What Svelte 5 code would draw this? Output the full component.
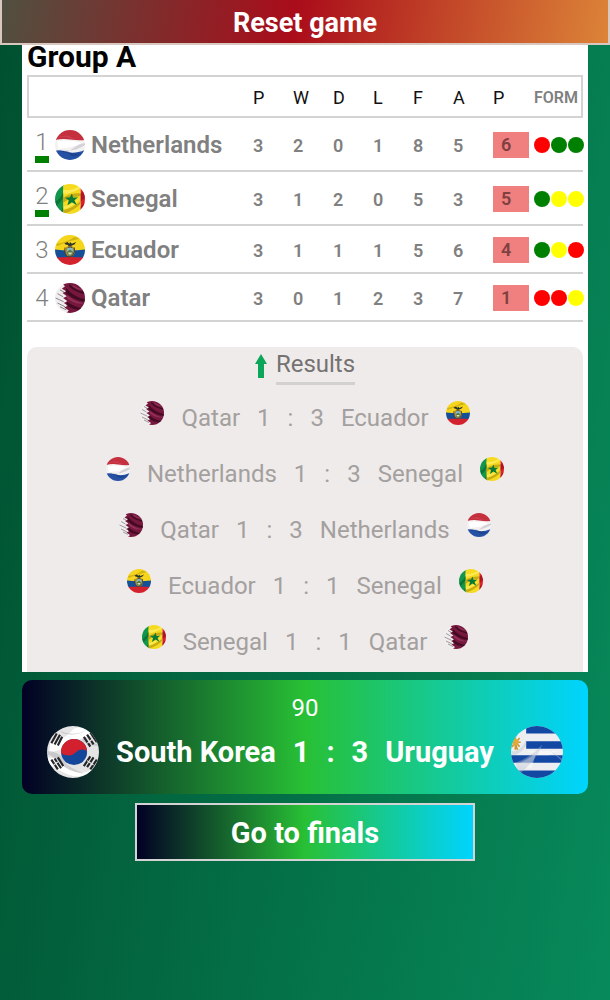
<script>
  const standings = [
    { team: 'Netherlands', stats: [3, 2, 0, 1, 8, 5], points: 6, form: ['loss', 'win', 'win'] },
    { team: 'Senegal', stats: [3, 1, 2, 0, 5, 3], points: 5, form: ['win', 'draw', 'draw'] },
    { team: 'Ecuador', stats: [3, 1, 1, 1, 5, 6], points: 4, form: ['win', 'draw', 'loss'] },
    { team: 'Qatar', stats: [3, 0, 1, 2, 3, 7], points: 1, form: ['loss', 'loss', 'draw'] }
  ];

  const results = [
    { home: 'Qatar', hg: 1, ag: 3, away: 'Ecuador' },
    { home: 'Netherlands', hg: 1, ag: 3, away: 'Senegal' },
    { home: 'Qatar', hg: 1, ag: 3, away: 'Netherlands' },
    { home: 'Ecuador', hg: 1, ag: 1, away: 'Senegal' },
    { home: 'Senegal', hg: 1, ag: 1, away: 'Qatar' }
  ];

  const columns = ['P', 'W', 'D', 'L', 'F', 'A'];
</script>

{#snippet flag(team)}
  <svg class="flag" viewBox="0 0 48 48" aria-hidden="true">
    {#if team === 'Netherlands'}
      <path fill="#f3f1f2" d="M0 0h48v48H0z" />
      <path fill="#c5303f" d="M0 0h48v16Q36 17 24 15T0 16z" />
      <path fill="#2550a4" d="M0 33Q10 31 20 35T48 32V48H0z" />
      <path fill="#fff" d="M3 18Q20 15 43 20Q32 28 6 30z" />
      <path fill="#d4d2d6" d="M48 21Q37 22 28 30T9 31Q28 37 48 24z" />
      <path fill="#173b83" opacity=".6" d="M5 34q14 1 19 6t20-3q-13 2-19-1T5 34z" />
      <path fill="#db6570" opacity=".3" d="M4 12Q17 6 26 11t19 0q-12 5-20 2T4 12z" />
    {:else if team === 'Senegal'}
      <path fill="#13964b" d="M0 0h15v48H0z" />
      <path fill="#f6da20" d="M13 0h28v48H13z" />
      <path fill="#df202c" d="M41 0h7v48h-7z" />
      <path fill="#a98e0b" opacity=".6" d="M13 22Q25 14 41 15v4Q26 20 13 30zM13 42Q27 39 41 27v4Q31 42 15 47z" />
      <path fill="#fff16a" opacity=".7" d="M13 9Q25 12 39 3v5Q26 15 13 16zM14 36Q29 33 40 22Q30 37 14 40z" />
      <path fill="#075f2c" opacity=".6" d="M0 28Q8 25 13 13V22Q9 30 2 35zM7 48Q11 42 13 37v11z" />
      <path fill="#940f1d" opacity=".6" d="M41 15l7-5v12l-7 6zM41 36l7-7v8l-7 8z" />
      <path fill="#087a35" d="M27 15l2 7 8-1-6 5 4 8-8-5-7 5 2-8-6-4 8-1z" />
    {:else if team === 'Ecuador'}
      <path fill="#f6d51d" d="M0 0h48v25H0z" />
      <path fill="#155097" d="M0 23q24 3 48 0v14H0z" />
      <path fill="#d3212d" d="M0 36q24-2 48 0v12H0z" />
      <path fill="#c3a411" opacity=".7" d="M2 14Q18 12 31 3l9 3Q22 9 3 18z" />
      <path fill="#2c332a" d="M15 13l5-2 3 3 1-3 3 3 7-3-3 4-5 2 1 3h-5l-1-4-4-1z" />
      <ellipse cx="24" cy="26" rx="8" ry="9" fill="#ad8830" />
      <ellipse cx="24" cy="26" rx="5" ry="7" fill="#85bfcd" />
      <path fill="#527c44" d="M19 27l5-4 5 4-2 6h-6z" />
      <path fill="none" stroke="#4c3929" stroke-width="1.5" d="M16 20q-2 11 5 15l6-1q6-6 4-14M21 20q3-2 6 0" />
      <path fill="#e4dbba" d="M21 28h6l-1 3h-4z" />
    {:else if team === 'Qatar'}
      <path fill="#f0eeef" d="M0 0h48v48H0z" />
      <path fill="#76183e" d="M11 0l5 5-5 4 7 4-6 3 7 5-6 3 7 5-6 3 7 4-6 3 7 5-4 4h30V0z" />
      <path fill="#3a071d" opacity=".8" d="M18 8Q29 22 48 26v4Q30 28 17 16zM23 2Q36 14 48 14v4Q31 14 22 5zM19 29Q31 39 45 40l-3 3Q28 43 18 35z" />
      <path fill="#b04a71" opacity=".5" d="M20 20Q34 32 48 32Q34 36 19 24zM29 3Q38 10 47 10Q38 13 28 5z" />
      <path fill="none" stroke="#51434a" stroke-width="1" d="M4 17l9 5M1 24l13 6M4 32l12 6M8 38l10 5M8 11l7 4" />
    {:else if team === 'South Korea'}
      <path fill="#e5e5e6" d="M0 0h48v48H0z" />
      <path fill="#fff" d="M3 15Q14 14 22 5T43 9Q32 10 26 15T2 25zM0 29q12 0 21 9t21 2q-10 10-22 5T0 34z" />
      <path fill="#c2c2c5" opacity=".8" d="M11 4q13 7 27-1Q27 10 15 7zM0 23q11 0 15 8t20 13q-16-2-22-9T0 26zM34 12q7 6 14 4v2q-9 1-16-5z" />
      <circle cx="25" cy="24" r="12" fill="#14479a" />
      <path fill="#d2202e" d="M13 25a12 12 0 0 1 24-2q-6-3-10 1t-8 3q-4 0-6-2z" />
      <path fill="none" stroke="#252629" stroke-width="2" d="M4 16l5-9M7 17l5-9M10 18l4-8M37 8l6 9M40 6l6 9M34 10l6 9M4 31l6 9M7 30l6 9M10 29l5 8M37 38l6-9M40 40l6-9M34 37l6-9" />
      <path fill="none" stroke="#e9e9e9" stroke-width="1" d="M37 16l5-4M5 37l5-4M37 32l6 4" />
    {:else}
      <path fill="#eceef2" d="M0 0h48v48H0z" />
      <path fill="#1247a4" d="M14 0h34v7H14zM14 14h34v7H14zM0 27h48v7H0zM0 41h48v7H0z" />
      <path fill="#fff" opacity=".4" d="M15 23h28l-8 4H24zM3 36Q15 32 23 25l-4 14z" />
      <path fill="#b8bfca" opacity=".4" d="M4 34Q18 29 29 17Q23 32 8 44zM35 22l13 9v2zM0 23q8 2 14-10v5Q8 27 1 27z" />
      <path fill="none" stroke="#ce9831" stroke-width="1.5" d="M0 15h9M4 8v14M0 11l8 8M0 20l8-9M1 8l5 14" />
      <circle cx="4" cy="15" r="3" fill="#dfaa3b" />
    {/if}
  </svg>
{/snippet}

<div class="page">
  <button class="reset" type="button">Reset game</button>

  <main>
    <section class="group">
      <h1>Group A</h1>
      <table>
        <thead>
          <tr>
            <th class="team-col" aria-label="Team"></th>
            {#each columns as column}
              <th class="stat-col">{column}</th>
            {/each}
            <th class="points-col">P</th>
            <th class="form-col">FORM</th>
          </tr>
        </thead>
        <tbody>
          {#each standings as row, i}
            <tr class:qualified={i < 2}>
              <td>
                <div class="team">
                  <span class="rank">{i + 1}</span>
                  {@render flag(row.team)}
                  <span class="name">{row.team}</span>
                </div>
              </td>
              {#each row.stats as value}
                <td class="stat">{value}</td>
              {/each}
              <td class="stat"><span class="points">{row.points}</span></td>
              <td>
                <div class="form">
                  {#each row.form as outcome}
                    <span class="dot {outcome}"></span>
                  {/each}
                </div>
              </td>
            </tr>
          {/each}
        </tbody>
      </table>

      <div class="results">
        <button class="toggle" type="button">
          <svg class="arrow" viewBox="0 0 12 24" aria-hidden="true">
            <path fill="#0aa65a" d="M6 0l6 10H9v14H3V10H0z" />
          </svg>
          <span>Results</span>
        </button>
        {#each results as match}
          <div class="match">
            {@render flag(match.home)}
            <span>{match.home}</span>
            <span>{match.hg}</span>
            <span>:</span>
            <span>{match.ag}</span>
            <span>{match.away}</span>
            {@render flag(match.away)}
          </div>
        {/each}
      </div>
    </section>

    <section class="live">
      <div class="minute">90</div>
      <div class="score">
        {@render flag('South Korea')}
        <span>South Korea</span>
        <span>1</span>
        <span>:</span>
        <span>3</span>
        <span>Uruguay</span>
        {@render flag('Uruguay')}
      </div>
    </section>

    <button class="finals" type="button">Go to finals</button>
  </main>
</div>

<style>
  .page {
    box-sizing: border-box;
    min-height: 100vh;
    background: linear-gradient(100deg, #00502f, #078a5b);
    font-family: Roboto, "Liberation Sans", sans-serif;
  }

  button {
    font-family: inherit;
    cursor: pointer;
  }

  .reset {
    display: block;
    width: 100%;
    height: 45px;
    padding: 2px 0 0;
    border: 2px solid #d8c8bf;
    border-top: 0;
    background: linear-gradient(100deg, #505040, #aa0c1a 48%, #dc8438);
    color: #fff;
    font-size: 27px;
    font-weight: 700;
  }

  main {
    display: flex;
    flex-direction: column;
    padding: 0 22px;
  }

  .group {
    padding: 0 5px;
    background: #fff;
  }

  h1 {
    margin: 0;
    padding-bottom: 6px;
    font-size: 30px;
    line-height: 24px;
    font-weight: 700;
    color: #000;
  }

  table {
    width: 100%;
    table-layout: fixed;
    border-collapse: separate;
    border-spacing: 0;
  }

  th {
    height: 37px;
    padding: 2px 0 0;
    border: 0 solid #d3d3d3;
    border-width: 2px 0;
    text-align: left;
    font-size: 18px;
    font-weight: 400;
    color: #111;
  }

  th:first-child {
    border-left-width: 2px;
  }

  th:last-child {
    border-right-width: 2px;
  }

  .stat-col {
    width: 40px;
  }

  .points-col {
    width: 41px;
  }

  .form-col {
    width: 47px;
    font-size: 16px;
    font-weight: 600;
    color: #808080;
  }

  td {
    height: 44px;
    padding: 2px 0 0;
    border-bottom: 2px solid #d3d3d3;
    color: #808080;
  }

  .qualified td {
    height: 50px;
  }

  .team {
    display: flex;
    align-items: center;
    gap: 6px;
    padding-left: 8px;
    font-size: 24px;
  }

  .team .flag {
    width: 30px;
    height: 30px;
  }

  .rank {
    display: flex;
    flex-direction: column;
    align-items: center;
    width: 14px;
    font-weight: 300;
    line-height: 28px;
  }

  .qualified .rank::after {
    content: "";
    width: 14px;
    height: 7px;
    background: #008000;
  }

  .name {
    font-weight: 600;
  }

  .stat {
    font-size: 18px;
    font-weight: 600;
  }

  .points {
    display: block;
    box-sizing: border-box;
    width: 36px;
    padding-left: 8px;
    background: #f08080;
    color: #804040;
    line-height: 26px;
  }

  .form {
    display: flex;
    gap: 1px;
  }

  .dot {
    flex: none;
    width: 16px;
    height: 16px;
    border-radius: 50%;
  }

  .win {
    background: #008000;
  }

  .draw {
    background: #ffff00;
  }

  .loss {
    background: #ff0000;
  }

  .flag {
    flex: none;
    border-radius: 50%;
  }

  .results {
    display: flex;
    flex-direction: column;
    margin-top: 25px;
    padding-bottom: 7px;
    border-radius: 10px 10px 0 0;
    background: #efebea;
  }

  .toggle {
    display: flex;
    align-items: center;
    justify-content: center;
    gap: 9px;
    padding: 0;
    border: 0;
    background: none;
    font-size: 24px;
    color: #757272;
  }

  .toggle span {
    padding-bottom: 1px;
    border-bottom: 3px solid #d3d1d0;
    line-height: 34px;
  }

  .arrow {
    width: 12px;
    height: 24px;
  }

  .match,
  .score {
    display: flex;
    justify-content: center;
    gap: 17px;
  }

  .match {
    height: 40px;
    padding-top: 16px;
    align-items: flex-start;
    font-size: 24px;
    line-height: 34px;
    color: #a3a09f;
  }

  .match .flag {
    width: 24px;
    height: 24px;
  }

  .live {
    box-sizing: border-box;
    margin-top: 8px;
    padding: 14px 0 16px;
    border-radius: 10px;
    background: linear-gradient(90deg, #020024, #28c035 50%, #00d4ff);
    color: #fff;
    text-align: center;
  }

  .minute {
    font-size: 24px;
    line-height: 28px;
  }

  .score {
    align-items: center;
    padding-top: 4px;
    font-size: 29px;
    font-weight: 700;
  }

  .score .flag {
    width: 52px;
    height: 52px;
  }

  .finals {
    align-self: center;
    width: 60%;
    height: 58px;
    margin-top: 9px;
    padding: 2px 0 0;
    border: 2px solid #d3d3d3;
    background: linear-gradient(90deg, #020024, #28c035 50%, #00d4ff);
    color: #fff;
    font-size: 29px;
    font-weight: 700;
  }
</style>
